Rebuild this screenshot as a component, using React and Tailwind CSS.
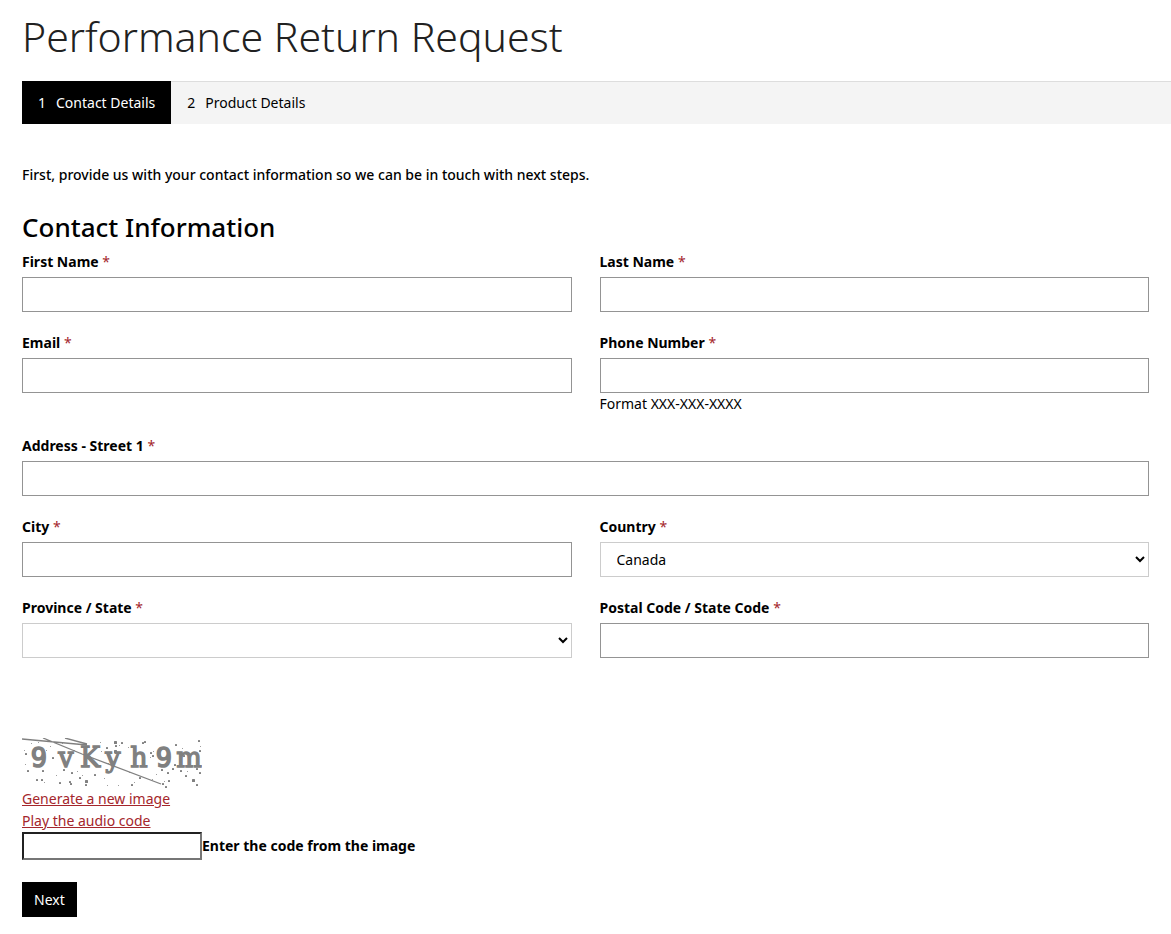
const captchaChars = [
  { char: "9", x: 17 },
  { char: "v", x: 44 },
  { char: "K", x: 68 },
  { char: "y", x: 91 },
  { char: "h", x: 117 },
  { char: "9", x: 142 },
  { char: "m", x: 167 },
];

// x, y, size
const captchaDots = [
  [3, 15, 2], [2, 12, 1], [9, 5, 1], [16, 4, 1], [5, 32, 2], [3, 26, 1], [20, 32, 2], [14, 41, 2],
  [19, 41, 2], [22, 44, 1], [30, 19, 2], [41, 31, 2], [34, 37, 1], [28, 8, 1], [24, 12, 1], [40, 5, 1],
  [37, 44, 2], [47, 43, 2], [48, 45, 2], [49, 34, 2], [55, 33, 1], [63, 42, 3], [63, 46, 2], [60, 37, 1],
  [57, 39, 2], [72, 36, 2], [52, 12, 1], [78, 4, 1], [79, 13, 1], [84, 9, 2], [92, 3, 3], [93, 7, 2],
  [92, 12, 3], [94, 18, 2], [99, 4, 2], [97, 7, 1], [86, 25, 1], [85, 47, 1], [96, 47, 1], [82, 40, 1],
  [106, 9, 1], [107, 34, 1], [109, 46, 2], [112, 44, 1], [117, 39, 2], [120, 4, 2], [122, 3, 2],
  [128, 14, 2], [130, 17, 2], [131, 13, 1], [128, 19, 1], [134, 36, 1], [139, 31, 2], [130, 41, 1],
  [140, 45, 2], [143, 48, 2], [146, 42, 2], [142, 43, 1], [145, 34, 2], [150, 30, 2], [153, 6, 2],
  [158, 32, 2], [160, 10, 1], [157, 15, 2], [161, 17, 2], [163, 37, 2], [165, 33, 1], [170, 41, 3],
  [174, 46, 2], [176, 2, 2], [177, 12, 2], [177, 34, 2], [174, 30, 2], [152, 26, 2], [178, 8, 1],
];

function Field({ id, label, help, wide, children }) {
  return (
    <div className={wide ? "col-span-2" : ""}>
      <label htmlFor={id} className="block mb-1 text-sm leading-[22px] font-bold">
        {label} <span className="font-normal text-[#a4262c]">*</span>
      </label>
      {children || (
        <input
          id={id}
          type="text"
          className="block w-full h-[35px] px-4 border border-[#949494] bg-white"
        />
      )}
      {help && <p className="text-sm leading-[22px]">{help}</p>}
    </div>
  );
}

function Select({ id, options }) {
  return (
    <select
      id={id}
      className="block w-full h-[35px] px-3 border border-[#cccccc] bg-white text-sm"
    >
      {options.map((o) => (
        <option key={o}>{o}</option>
      ))}
    </select>
  );
}

function Captcha() {
  return (
    <svg width="180" height="50" viewBox="0 0 180 50" className="block" fill="#808080">
      <g fontSize="27" textAnchor="middle" stroke="#808080">
        {captchaChars.map((c, i) => (
          <text
            key={i}
            x={c.x}
            y="29"
            fontFamily={c.char === "9" ? "DejaVu Sans Mono, monospace" : "DejaVu Serif, serif"}
            strokeWidth={c.char === "9" ? 1.6 : 1.3}
          >
            {c.char}
          </text>
        ))}
      </g>
      <path d="M0 1L65 7M21 0L60 16L139 46M43 0L65 6" stroke="#808080" strokeWidth="1.3" fill="none" />
      {captchaDots.map(([x, y, s], i) => (
        <rect key={i} x={x} y={y} width={s} height={s} rx="0.5" />
      ))}
    </svg>
  );
}

export default function App() {
  return (
    <main className="font-['Noto_Sans','Open_Sans',sans-serif] text-black bg-white pb-4">
      <h1 className="px-[22px] pt-1 text-[41px] leading-[64px] font-light text-[#212121]">
        Performance Return Request
      </h1>

      <ol className="flex mt-[13px] ml-[22px] bg-[#f4f4f4] text-sm leading-[22px]">
        <li className="flex gap-[10px] px-4 pt-[11px] pb-[10px] bg-black text-white">
          <span>1</span>
          <span>Contact Details</span>
        </li>
        <li className="flex grow gap-[10px] px-4 pt-[10px] pb-[10px] border-t border-[#dddddd]">
          <span>2</span>
          <span>Product Details</span>
        </li>
      </ol>

      <form className="px-[22px]" onSubmit={(e) => e.preventDefault()}>
        <p className="mt-10 text-sm leading-[22px] font-medium">
          First, provide us with your contact information so we can be in touch with next steps.
        </p>
        <h2 className="mt-[23px] text-[26px] leading-[36px] font-medium">Contact Information</h2>

        <div className="grid grid-cols-2 gap-x-7 gap-y-5 mt-[6px]">
          <Field id="firstName" label="First Name" />
          <Field id="lastName" label="Last Name" />
          <Field id="email" label="Email" />
          <Field id="phone" label="Phone Number" help="Format XXX-XXX-XXXX" />
          <Field id="street" label="Address - Street 1" wide />
          <Field id="city" label="City" />
          <Field id="country" label="Country">
            <Select id="country" options={["Canada", "United States"]} />
          </Field>
          <Field id="province" label="Province / State">
            <Select id="province" options={["", "Ontario", "Quebec"]} />
          </Field>
          <Field id="postalCode" label="Postal Code / State Code" />
        </div>

        <div className="mt-20 text-sm leading-[22px]">
          <Captcha />
          <a href="#new-image" className="block w-fit text-[#a4262c] underline">
            Generate a new image
          </a>
          <a href="#audio" className="block w-fit text-[#a4262c] underline">
            Play the audio code
          </a>
          <div className="flex items-center">
            <input
              id="captcha"
              type="text"
              className="w-[180px] h-7 border-2 border-t-[#212121] border-l-[#212121] border-r-[#767676] border-b-[#767676]"
            />
            <label htmlFor="captcha" className="font-bold">Enter the code from the image</label>
          </div>
        </div>

        <button type="submit" className="block mt-[22px] h-[35px] px-3 bg-black text-white text-sm">
          Next
        </button>
      </form>
    </main>
  );
}
